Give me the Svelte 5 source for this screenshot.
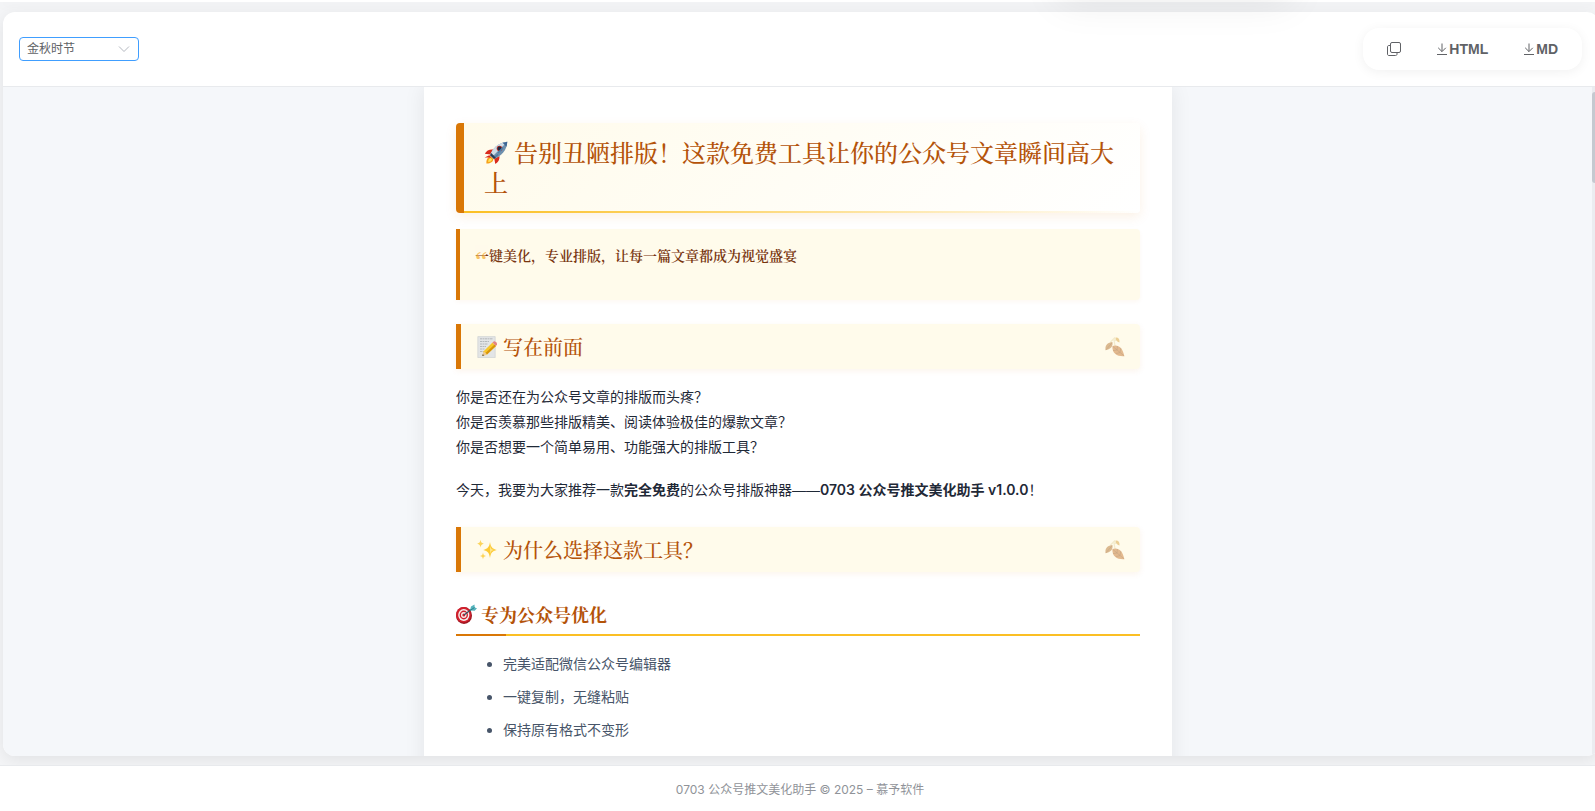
<script lang="ts">
	const themes = ['金秋时节', '清新绿意', '海洋蓝调', '极简黑白'];
	const questions = [
		'你是否还在为公众号文章的排版而头疼？',
		'你是否羡慕那些排版精美、阅读体验极佳的爆款文章？',
		'你是否想要一个简单易用、功能强大的排版工具？'
	];
	const features = ['完美适配微信公众号编辑器', '一键复制，无缝粘贴', '保持原有格式不变形'];

	let theme = $state(themes[0]);
</script>

{#snippet download()}
	<svg class="icon" viewBox="0 0 14 14" aria-hidden="true">
		<path d="M7 1.5v8M3.2 5.8 7 9.6l3.8-3.8M2 12.5h10" />
	</svg>
{/snippet}

{#snippet leaves()}
	<svg class="leaves" viewBox="0 0 20 20" aria-hidden="true">
		<path d="M5.500 5 9.500 1l1 3M9 3l1 6" fill="none" stroke="#e8dcae" stroke-width="1.2" />
		<path d="M.6 13.200C-.2 8.500 2.400 5.600 7.400 5c.8 4.200-1.400 7.400-6.800 8.200z" fill="#b87936" />
		<path d="M10.500.600c2.800-.3 4.300 1.200 4 5-2.500-.6-4-2.200-4-5z" fill="#d9a441" />
		<path d="M7.400 9c5.600-1.800 10.200 1.200 12 10.200-7 .4-12.400-2.400-12-10.200z" fill="#c97a34" />
		<path d="M1 12.800 6.800 6M8 9.600l11 9.200M12 13l.4-4M12 13l-4 .6M15 15.600l.8-4.400M15 15.600l-4.200 1" fill="none" stroke="#8d501c" stroke-width=".6" />
	</svg>
{/snippet}

<div class="page">
	<header class="topbar">
		<div class="popover"></div>
	</header>

	<main class="stage">
		<section class="card">
			<div class="toolbar">
				<label class="theme">
					<select bind:value={theme} aria-label="主题">
						{#each themes as name}
							<option>{name}</option>
						{/each}
					</select>
					<svg class="chevron" viewBox="0 0 12 12" aria-hidden="true"><path d="m1 3.500 5 5 5-5" /></svg>
				</label>
				<div class="actions">
					<button type="button" aria-label="复制">
						<svg class="icon" viewBox="0 0 14 14" aria-hidden="true">
							<rect x="3.500" y=".5" width="10" height="10" rx="1.500" />
							<path d="M3.500 3.500H2C1 3.500.5 4 .5 5v7c0 1 .5 1.500 1.500 1.500h6.500c1 0 1.500-.5 1.500-1.500v-1.500" />
						</svg>
					</button>
					<button type="button">{@render download()}HTML</button>
					<button type="button">{@render download()}MD</button>
				</div>
			</div>

			<div class="preview">
				<article class="paper">
					<h1>
						<svg class="emoji" viewBox="0 0 24 24" aria-hidden="true">
							<path d="M7 15.500c-3 .2-5 3-4.600 7 3.600.2 6.800-1.400 7-4.500z" fill="#f7a11b" />
							<path d="M6.500 17c-1.800.8-2.400 2.400-2.300 4 1.800 0 3.300-.8 3.900-2.500z" fill="#ffe45c" />
							<path d="M9.500 8.500C5.500 8 2.500 9.500.8 12.800l5.700.7zM15.500 15c.3 3.500-1.200 6.200-4.200 8l-1-5.300zM.6 16.500l4.800-2.300 2 2.300z" fill="#d92b1c" />
							<path d="M6 14.200C8.500 7.500 14.500 1.500 23.300.8 23 9 17.200 15.500 10 18z" fill="#6f90ad" />
							<path d="M6 14.200C8.500 7.500 14.500 1.500 23.300.8L8 16z" fill="#cfdde7" />
							<path d="M18.500 1.800 23.300.8l-.8 5z" fill="#3c6694" />
							<path d="m7.200 12 4.800 4.800-2 1.200-4-3.800z" fill="#2b3a52" />
							<circle cx="15.500" cy="7.500" r="2.800" fill="#b3312a" />
							<circle cx="15.500" cy="7.500" r="1.900" fill="#1d2941" />
							<path d="m14 12 5-5.500M11 16l3-2.500" stroke="#4c7ea8" stroke-width="1.500" />
						</svg>
						告别丑陋排版！这款免费工具让你的公众号文章瞬间高大上
					</h1>

					<blockquote>
						<p>一键美化，专业排版，让每一篇文章都成为视觉盛宴</p>
					</blockquote>

					<h2>
						<svg class="emoji" viewBox="0 0 20 22" aria-hidden="true">
							<path d="M.8.600h17.400v21H.8z" fill="#e3e5e6" stroke="#c8ccce" stroke-width=".6" />
							<path d="M3 2.800h13M3 5.500h9M3 8h8M3 10.500h6M3 13h5M3 15.500h4" stroke="#a8adb0" stroke-width=".8" stroke-dasharray="2 .5" />
							<path d="m5.300 20 1.400-4.800L15.500 6.500l3.500 3.500-9 8.500z" fill="#f8c729" />
							<path d="m8.500 17 9-8.500L19 10l-9 8.500z" fill="#d7940b" />
							<path d="m15.500 6.500 1.200-1.100c1.200-1 4.300 1.800 3.200 3.400L19 10z" fill="#e48483" />
							<path d="m5.300 20 1.400-4.800L10 18.500z" fill="#ecc898" />
							<path d="m5.300 20 .5-1.800 1.300 1.100z" fill="#333" />
						</svg>
						写在前面
						{@render leaves()}
					</h2>
					<p>
						{#each questions as line, i}{#if i > 0}<br />{/if}{line}{/each}
					</p>
					<p>今天，我要为大家推荐一款<strong>完全免费</strong>的公众号排版神器<span class="dash">——</span><strong>0703 公众号推文美化助手 v1.0.0</strong>！</p>

					<h2>
						<svg class="emoji" viewBox="0 0 20 22" aria-hidden="true">
							<path d="M13 3c.8 5 2 6.500 6.800 8-4.800 1.200-6 2.800-6.800 8-.8-5.200-2-6.800-6.800-8C11 9.500 12.200 8 13 3z" fill="#fcc934" />
							<path d="M3.500.800c.4 2.500 1 3.200 3.300 3.900-2.300.7-2.900 1.300-3.300 3.800C3.100 6 2.500 5.400.200 4.700 2.500 4 3.100 3.300 3.500.800zM6 13.500c.4 2.300.9 2.900 3 3.500-2.100.6-2.600 1.200-3 3.500-.4-2.300-.9-2.900-3-3.500 2.100-.6 2.600-1.200 3-3.500z" fill="#fcd45a" />
							<path d="M13 6c.5 3.400 1.300 4.300 4.300 5-3 .7-3.800 1.600-4.300 5z" fill="#ffe486" />
						</svg>
						为什么选择这款工具？
						{@render leaves()}
					</h2>

					<h3>
						<svg class="emoji" viewBox="0 0 21 20" aria-hidden="true">
							<ellipse cx="8" cy="11.500" rx="8" ry="8.500" fill="#9c1620" />
							<ellipse cx="7.500" cy="10.800" rx="7.500" ry="7.800" fill="#d2202d" />
							<ellipse cx="7.800" cy="11" rx="5.600" ry="5.900" fill="#f5f1ef" />
							<ellipse cx="7.800" cy="11" rx="4.200" ry="4.400" fill="#d2202d" />
							<ellipse cx="7.800" cy="11" rx="2.800" ry="3" fill="#f5f1ef" />
							<ellipse cx="7.800" cy="11" rx="1.500" ry="1.600" fill="#d2202d" />
							<path d="m8 11 8.500-6.500" stroke="#33525f" stroke-width="1.200" />
							<path d="m14 6.500 1-4L18.500.500l.2 3 2.300.8-2.300 2.500z" fill="#55b4bd" />
							<path d="m14 6.500 4.500-3" stroke="#24727d" stroke-width=".8" />
						</svg>
						专为公众号优化
					</h3>
					<ul>
						{#each features as feature}
							<li>{feature}</li>
						{/each}
					</ul>
				</article>
				<div class="scrollbar"><div class="thumb"></div></div>
			</div>
		</section>
	</main>

	<footer>0703 公众号推文美化助手 © 2025 – 慕予软件</footer>
</div>

<style>
	:global(body) {
		margin: 0;
		background: #f2f3f5;
	}

	.page {
		--sans: Inter, 'Noto Sans CJK SC', sans-serif;
		--song: 'Songti SC', 'Noto Serif CJK SC', 'Noto Serif SC', 'Noto Sans CJK SC', serif;
		display: flex;
		flex-direction: column;
		height: 100vh;
		overflow: hidden;
		font-family: var(--sans);
		background: #f4f5f7;
	}

	.topbar {
		position: relative;
		flex: none;
		height: 2px;
		background: #fff;
		box-shadow: 0 2px 12px rgba(0, 0, 0, 0.08);
	}

	/* menu hanging off the header, only its shadow reaches the page */
	.popover {
		position: absolute;
		z-index: 2;
		right: 304px;
		bottom: 4px;
		width: 232px;
		height: 60px;
		box-shadow: 0 4px 40px rgba(0, 0, 0, 0.08);
	}

	.stage {
		display: flex;
		flex: 1;
		min-height: 0;
		margin-right: -4px;
		padding: 10px 0 9px 3px;
	}

	.card {
		display: flex;
		flex: 1;
		flex-direction: column;
		min-width: 0;
		overflow: hidden;
		border-radius: 12px;
		background: #fff;
		box-shadow: 0 4px 16px rgba(0, 0, 0, 0.08);
	}

	.toolbar {
		display: flex;
		flex: none;
		align-items: center;
		justify-content: space-between;
		padding: 16px 17px 16px 16px;
		border-bottom: 1px solid #e8eaed;
	}

	.theme {
		position: relative;
		display: flex;
	}

	select {
		width: 120px;
		height: 24px;
		padding: 0 7px;
		border: 1px solid #409eff;
		border-radius: 4px;
		outline: none;
		appearance: none;
		background: #fff;
		color: #606266;
		font: 12px/20px var(--sans);
	}

	.chevron {
		position: absolute;
		top: 6px;
		right: 9px;
		width: 12px;
		height: 12px;
		pointer-events: none;
		fill: none;
		stroke: #b4b8c0;
	}

	.actions {
		display: flex;
		gap: 2px;
		padding: 8px;
		border-radius: 16px;
		background: #fff;
		box-shadow: 0 2px 12px rgba(0, 0, 0, 0.06);
	}

	button {
		display: flex;
		align-items: center;
		height: 26px;
		padding: 0 16px;
		border: 0;
		background: none;
		color: #606266;
		font: bold 14px 'Liberation Sans', sans-serif;
		cursor: pointer;
	}

	.icon {
		width: 14px;
		height: 14px;
		fill: none;
		stroke: currentColor;
	}

	.preview {
		position: relative;
		flex: 1;
		min-height: 0;
		padding-right: 6px;
		overflow: hidden;
		background: #f5f7fa;
	}

	.paper {
		box-sizing: border-box;
		max-width: 748px;
		margin: 0 auto;
		padding: 36px 32px;
		background: #fff;
		box-shadow: 0 0 20px rgba(0, 0, 0, 0.08);
		color: #1f2937;
		font-size: 14px;
		line-height: 25px;
	}

	.scrollbar {
		position: absolute;
		top: 0;
		right: 0;
		bottom: 0;
		width: 7px;
		padding-top: 5px;
		background: #ebecf0;
	}

	.thumb {
		height: 91px;
		border-radius: 3px;
		background: #c5c9d0;
	}

	h1,
	h2,
	h3 {
		color: #b45309;
		font-family: var(--song);
	}

	h1 {
		position: relative;
		margin: 0 0 16px;
		padding: 14px 20px 16px;
		border-left: 8px solid #d97706;
		border-radius: 4px;
		background: linear-gradient(135deg, #fffbeb, #fff);
		box-shadow: 0 4px 12px rgba(217, 119, 6, 0.1);
		font-size: 24px;
		font-weight: 500;
		line-height: 30px;
	}

	h1::after {
		position: absolute;
		right: 0;
		bottom: 0;
		left: 0;
		height: 2px;
		background: linear-gradient(90deg, #fbbf24, transparent);
		content: '';
	}

	.emoji {
		display: inline-block;
		width: 24px;
		height: 24px;
		vertical-align: -3px;
	}

	blockquote {
		position: relative;
		margin: 0;
		padding: 15px 15px 16px;
		border-left: 4px solid #d97706;
		border-radius: 0 4px 4px 0;
		background: #fffbeb;
		box-shadow: 0 2px 4px rgba(217, 119, 6, 0.05);
		color: #78350f;
		font-family: var(--song);
		font-weight: 600;
		line-height: 22px;
	}

	blockquote::before {
		position: absolute;
		top: 18px;
		left: 15px;
		color: #f59e0b;
		font: 28px/28px 'Liberation Serif', serif;
		opacity: 0.6;
		content: '“';
	}

	p {
		margin: 0 0 18px;
	}

	strong {
		font-weight: 600;
	}

	/* both dashes a full em, so that they join */
	.dash {
		font-family: 'Liberation Sans', sans-serif;
	}

	h2 {
		display: flex;
		align-items: center;
		gap: 6px;
		margin: 24px 0 15px;
		padding: 8px 15px 8px 16px;
		border-left: 5px solid #d97706;
		border-radius: 0 4px 4px 0;
		background: #fffbeb;
		box-shadow: 0 2px 6px rgba(217, 119, 6, 0.08);
		font-size: 20px;
		font-weight: 500;
		line-height: 29px;
	}

	h2 .emoji {
		width: 20px;
		height: 22px;
	}

	.leaves {
		width: 20px;
		height: 20px;
		margin-left: auto;
		opacity: 0.5;
	}

	h3 {
		position: relative;
		display: flex;
		align-items: center;
		gap: 4px;
		margin: 28px 0 15px;
		padding-bottom: 6px;
		border-bottom: 2px solid #fbbf24;
		font-size: 18px;
		font-weight: 700;
		line-height: 28px;
	}

	h3 .emoji {
		width: 21px;
		height: 20px;
	}

	h3::after {
		position: absolute;
		bottom: -2px;
		left: 0;
		width: 50px;
		height: 2px;
		background: #d97706;
		content: '';
	}

	ul {
		margin: 0;
		padding-left: 47px;
		color: #475569;
	}

	li {
		margin-bottom: 8px;
	}

	footer {
		flex: none;
		padding: 13px 0 10px 5px;
		border-top: 1px solid #e8eaed;
		background: #fff;
		color: #909399;
		font-size: 12px;
		line-height: 22px;
		text-align: center;
	}
</style>
